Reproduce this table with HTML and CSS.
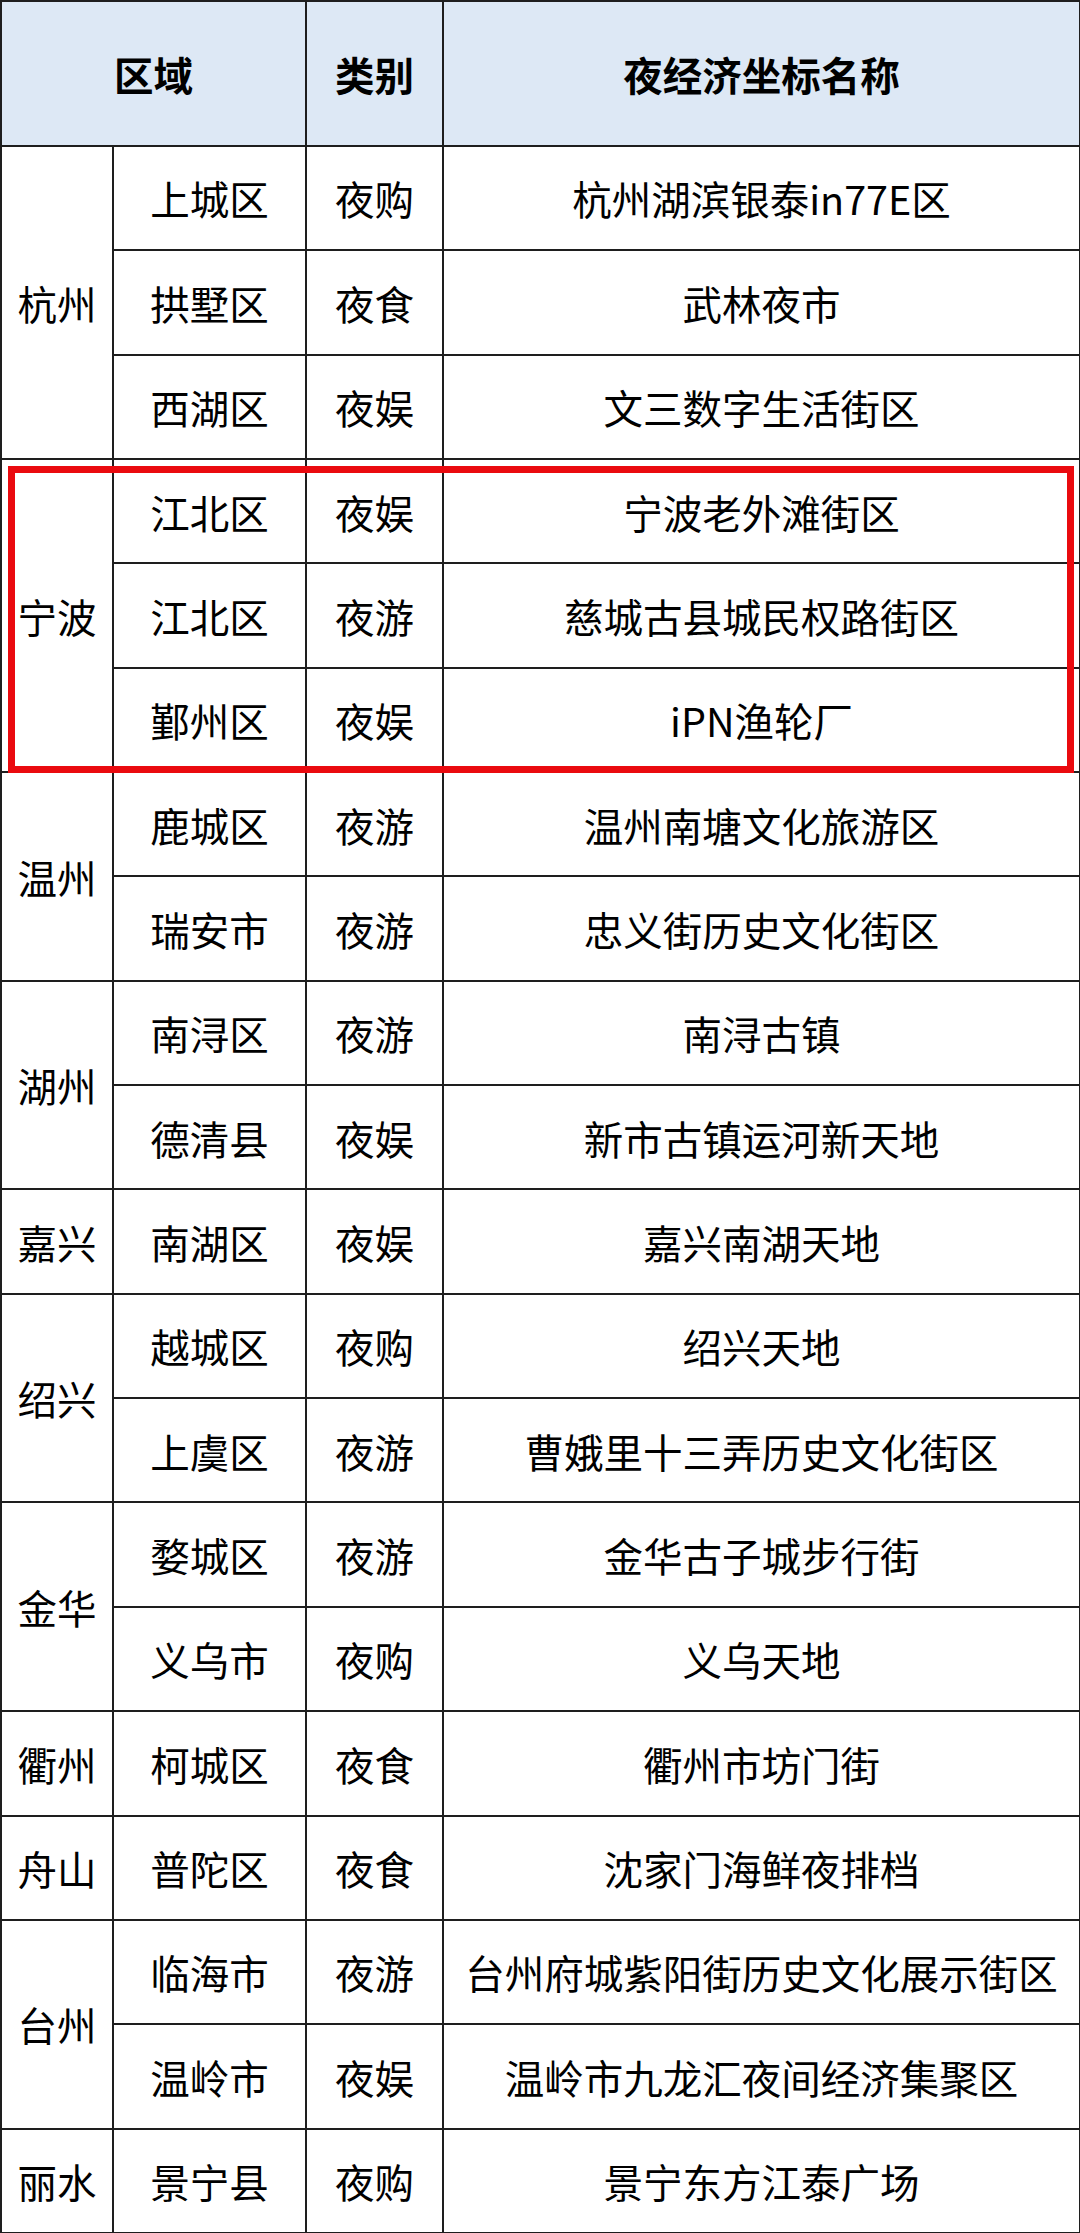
FILE: index.html
```html
<!DOCTYPE html>
<html lang="zh-CN">
<head>
<meta charset="utf-8">
<title>夜经济坐标</title>
<link rel="stylesheet" href="styles.css">
</head>
<body>
<div class="wrap">
  <table class="grid">
    <colgroup>
      <col class="c-city">
      <col class="c-dist">
      <col class="c-type">
      <col class="c-name">
    </colgroup>
    <thead>
      <tr class="head">
        <th colspan="2">区域</th>
        <th>类别</th>
        <th>夜经济坐标名称</th>
      </tr>
    </thead>
    <tbody>
      <tr><td rowspan="3">杭州</td><td>上城区</td><td>夜购</td><td>杭州湖滨银泰in77E区</td></tr>
      <tr><td>拱墅区</td><td>夜食</td><td>武林夜市</td></tr>
      <tr><td>西湖区</td><td>夜娱</td><td>文三数字生活街区</td></tr>
      <tr><td rowspan="3">宁波</td><td>江北区</td><td>夜娱</td><td>宁波老外滩街区</td></tr>
      <tr><td>江北区</td><td>夜游</td><td>慈城古县城民权路街区</td></tr>
      <tr><td>鄞州区</td><td>夜娱</td><td>iPN渔轮厂</td></tr>
      <tr><td rowspan="2">温州</td><td>鹿城区</td><td>夜游</td><td>温州南塘文化旅游区</td></tr>
      <tr><td>瑞安市</td><td>夜游</td><td>忠义街历史文化街区</td></tr>
      <tr><td rowspan="2">湖州</td><td>南浔区</td><td>夜游</td><td>南浔古镇</td></tr>
      <tr><td>德清县</td><td>夜娱</td><td>新市古镇运河新天地</td></tr>
      <tr><td>嘉兴</td><td>南湖区</td><td>夜娱</td><td>嘉兴南湖天地</td></tr>
      <tr><td rowspan="2">绍兴</td><td>越城区</td><td>夜购</td><td>绍兴天地</td></tr>
      <tr><td>上虞区</td><td>夜游</td><td>曹娥里十三弄历史文化街区</td></tr>
      <tr><td rowspan="2">金华</td><td>婺城区</td><td>夜游</td><td>金华古子城步行街</td></tr>
      <tr><td>义乌市</td><td>夜购</td><td>义乌天地</td></tr>
      <tr><td>衢州</td><td>柯城区</td><td>夜食</td><td>衢州市坊门街</td></tr>
      <tr><td>舟山</td><td>普陀区</td><td>夜食</td><td>沈家门海鲜夜排档</td></tr>
      <tr><td rowspan="2">台州</td><td>临海市</td><td>夜游</td><td>台州府城紫阳街历史文化展示街区</td></tr>
      <tr><td>温岭市</td><td>夜娱</td><td>温岭市九龙汇夜间经济集聚区</td></tr>
      <tr><td>丽水</td><td>景宁县</td><td>夜购</td><td>景宁东方江泰广场</td></tr>
    </tbody>
  </table>
  <div class="highlight"></div>
</div>
</body>
</html>
```

FILE: styles.css
```css
html, body {
  margin: 0;
  padding: 0;
  background: #ffffff;
}

.wrap {
  position: relative;
  width: 1080px;
}

.grid {
  border-collapse: collapse;
  table-layout: fixed;
  width: 1079px;
  font-family: "Noto Sans CJK SC", "Noto Sans", sans-serif;
  font-size: 39.5px;
  color: #000;
}

.c-city { width: 112px; }
.c-dist { width: 193px; }
.c-type { width: 137px; }
.c-name { width: 637px; }

.grid th,
.grid td {
  border: 2px solid #1e1e1e;
  padding: 0;
  text-align: center;
  vertical-align: middle;
  white-space: nowrap;
  line-height: 1.2;
}

.head {
  height: 145px;
  background: #dde8f5;
}

.head th {
  font-weight: 700;
}

.grid tbody tr {
  height: 104.35px;
}

.highlight {
  position: absolute;
  left: 8px;
  top: 466px;
  width: 1066px;
  height: 307px;
  border: 7px solid #ea0a0f;
  box-sizing: border-box;
  pointer-events: none;
}
```
